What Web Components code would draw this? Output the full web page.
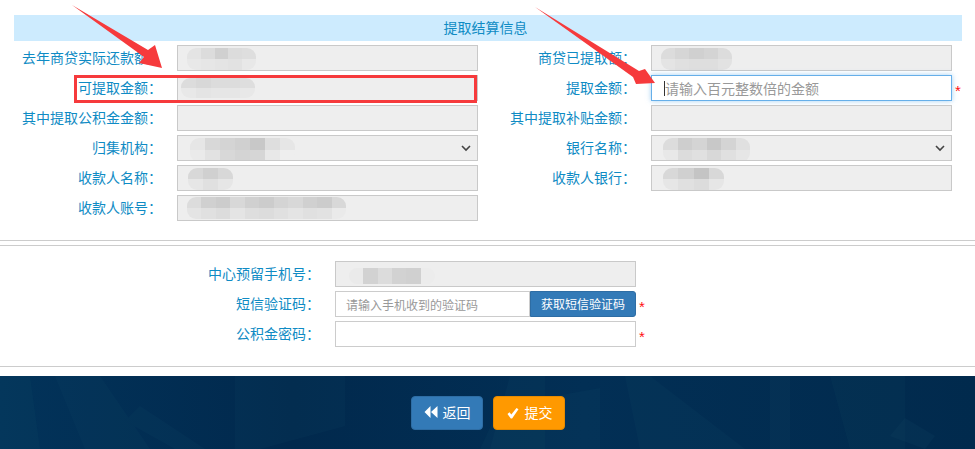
<!DOCTYPE html>
<html lang="zh-CN">
<head>
<meta charset="utf-8">
<title>提取结算信息</title>
<style>
  html, body { margin: 0; padding: 0; background: #fff; }
  body { font-family: "Noto Sans CJK SC", "Liberation Sans", sans-serif; font-size: 14px; overflow: hidden; }
</style>
</head>
<body>
<draw-page>
  <form-section top="15" bottom="19">
    <section-title>提取结算信息</section-title>
    <field-grid>
      <form-field label="去年商贷实际还款额：" state="readonly" mosaic="9,2,69,22;e4,dc,d0,dc,de;e8,e6,e4,e2,e8"></form-field>
      <form-field label="商贷已提取额：" side="right" state="readonly" mosaic="9,2,71,22;dc,d6,d0,d4,dc;e4,e0,de,de,e2"></form-field>
      <form-field label="可提取金额：" state="readonly" mosaic="3,2,74,20;dc,d8,dc,dc,de;e8,e4,e6,e6,e8"></form-field>
      <form-field label="提取金额：" side="right" state="focus" placeholder="请输入百元整数倍的金额" required></form-field>
      <form-field label="其中提取公积金金额：" state="readonly"></form-field>
      <form-field label="其中提取补贴金额：" side="right" state="readonly"></form-field>
      <form-field label="归集机构：" state="readonly" select mosaic="12,2,105,24;e6,d8,d4,d0,c8,de,e6;ea,e2,d8,d4,d6,e8,ee"></form-field>
      <form-field label="银行名称：" side="right" state="readonly" select mosaic="11,2,87,24;dc,ce,d4,c8,d4,e0;e8,dc,e0,d8,e0,e6"></form-field>
      <form-field label="收款人名称：" state="readonly" mosaic="10,2,45,22;d8,d0,d8;e6,e0,e6"></form-field>
      <form-field label="收款人银行：" side="right" state="readonly" mosaic="11,2,61,22;d8,d0,c4,d8;e6,e0,dc,e6"></form-field>
      <form-field label="收款人账号：" state="readonly" mosaic="9,1,159,22;dc,d0,cc,d8,d0,cc,d4,d8,d0,cc,d8;e4,e0,dc,e4,de,dc,e0,e4,e0,e2,ea"></form-field>
    </field-grid>
  </form-section>
  <form-section top="15" bottom="19" rule>
    <field-grid single>
      <form-field label="中心预留手机号：" side="single" state="readonly" mosaic="13,6,86,16;ea,d2,dc,d2,d0,ec"></form-field>
      <form-field label="短信验证码：" side="single" state="plain" placeholder="请输入手机收到的验证码" small sms required></form-field>
      <form-field label="公积金密码：" side="single" state="plain" required></form-field>
    </field-grid>
  </form-section>
  <page-footer>
    <action-button color="blue" icon="back">返回</action-button>
    <action-button color="orange" icon="ok">提交</action-button>
  </page-footer>
  <red-marks></red-marks>
</draw-page>

<script>
  class DrawPage extends HTMLElement {
    constructor() {
      super();
      this.attachShadow({ mode: 'open' }).innerHTML = `
        <style>
          :host { display: block; position: relative; width: 975px; height: 449px; overflow: hidden; }
        </style>
        <slot></slot>
      `;
    }
  }

  class FormSection extends HTMLElement {
    constructor() {
      super();
      const top = this.getAttribute('top');
      const bottom = this.getAttribute('bottom');
      this.attachShadow({ mode: 'open' }).innerHTML = `
        <style>
          :host { display: block; padding: ${top}px 0 ${bottom}px; border-bottom: 1px solid #ccc; }
          :host([rule]) { border-top: 1px solid #ccc; margin-top: 4px; }
        </style>
        <slot></slot>
      `;
    }
  }

  class SectionTitle extends HTMLElement {
    constructor() {
      super();
      this.attachShadow({ mode: 'open' }).innerHTML = `
        <style>
          :host {
            display: block; box-sizing: border-box;
            margin: 0 13px 4px 14px; padding-right: 5px; height: 26px; line-height: 25px;
            background: #cdebfe; color: #0f8bc4; text-align: center; font-size: 14px;
          }
        </style>
        <slot></slot>
      `;
    }
  }

  class FieldGrid extends HTMLElement {
    constructor() {
      super();
      this.attachShadow({ mode: 'open' }).innerHTML = `
        <style>
          :host { display: grid; grid-template-columns: 478px 497px; row-gap: 4px; }
          :host([single]) { grid-template-columns: 1fr; }
        </style>
        <slot></slot>
      `;
    }
  }

  class FormField extends HTMLElement {
    constructor() {
      super();
      const label = this.getAttribute('label');
      const side = this.getAttribute('side') || 'left';
      const state = this.getAttribute('state');
      const labelWidth = { left: 162, right: 158, single: 320 }[side];
      const placeholder = this.getAttribute('placeholder');
      const hasSms = this.hasAttribute('sms');

      const chevron = this.hasAttribute('select')
        ? `<svg class="chevron" width="10" height="7" viewBox="0 0 10 7"><path d="M1 1l4 4 4-4" fill="none" stroke="#444" stroke-width="1.6"/></svg>`
        : '';
      const caret = state === 'focus' ? '<i class="caret"></i>' : '';
      const text = placeholder ? `<span class="ph">${placeholder}</span>` : '';
      const sms = hasSms ? '<div class="sms">获取短信验证码</div>' : '';
      const star = this.hasAttribute('required') ? '<span class="star">*</span>' : '';

      this.attachShadow({ mode: 'open' }).innerHTML = `
        <style>
          :host {
            display: grid; grid-template-columns: ${labelWidth}px 301px 20px; column-gap: 15px;
            height: 26px; align-items: center;
          }
          .label { text-align: right; color: #0f8bc4; font-size: 14px; white-space: nowrap; line-height: 24px; height: 26px; }
          .group { display: flex; height: 26px; width: 301px; position: relative; }
          .box {
            flex: 1; min-width: 0; box-sizing: border-box; height: 26px; position: relative;
            border: 1px solid #ccc; background: #fff; display: flex; align-items: center; overflow: hidden;
          }
          .readonly { background: #eee; border-color: #c9c9c9; }
          .focus { border-color: #66afe9; box-shadow: 0 0 5px rgba(102,175,233,.6); overflow: visible; padding-left: 12px; }
          .plain { padding-left: 10px; }
          .ph { color: #999; font-size: ${this.hasAttribute('small') ? 12 : 14}px; white-space: nowrap; }
          .caret { width: 1px; height: 15px; background: #333; flex: none; }
          .chevron { position: absolute; right: 6px; top: 9px; }
          .mosaic { position: absolute; display: grid; border-radius: 9px; overflow: hidden; filter: blur(.5px); }
          .sms {
            flex: none; box-sizing: border-box; width: 106px; height: 26px; line-height: 24px; text-align: center;
            background: #337ab7; border: 1px solid #2e6da4; border-radius: 0 3px 3px 0; color: #fff; font-size: 12px;
          }
          .star { color: #f11; font: 15px/26px "Liberation Sans", sans-serif; margin-left: -12px; position: relative; top: 3px; }
        </style>
        <div class="label">${label}</div>
        <div class="group">
          <div class="box ${state}">${this.mosaicHtml()}${caret}${text}${chevron}</div>
          ${sms}
        </div>
        ${star}
      `;
    }

    // Smudged-out values: "x,y,w,h;row;row", each row a list of grey hex pairs
    mosaicHtml() {
      const spec = this.getAttribute('mosaic');
      if (!spec) return '';
      const [box, ...rows] = spec.split(';');
      const [x, y, w, h] = box.split(',');
      const cols = rows[0].split(',').length;
      const cells = rows.join(',').split(',').map(c => `<b style="background:#${c}${c}${c.slice(0, 2)}"></b>`).join('');
      return `<div class="mosaic" style="left:${x}px;top:${y}px;width:${w}px;height:${h}px;grid-template-columns:repeat(${cols},1fr);grid-template-rows:repeat(${rows.length},1fr)">${cells}</div>`;
    }
  }

  class PageFooter extends HTMLElement {
    constructor() {
      super();
      this.attachShadow({ mode: 'open' }).innerHTML = `
        <style>
          :host {
            display: flex; justify-content: center; gap: 10px; box-sizing: border-box; position: relative;
            margin-top: 9px; height: 73px; padding: 20px 0 0 1px; overflow: hidden;
            background: linear-gradient(90deg, #02335a 0%, #01294d 30%, #022f55 60%, #012a4d 100%);
          }
          svg { position: absolute; left: 0; top: 0; }
          ::slotted(*) { position: relative; }
        </style>
        <svg width="975" height="73" viewBox="0 0 975 73">
          <g fill="#1c5570" opacity=".1">
            <polygon points="55,0 100,0 150,73 85,73"/>
            <polygon points="140,30 205,73 175,73 125,45"/>
            <polygon points="235,0 345,0 345,50 260,73 235,73"/>
            <polygon points="510,0 545,0 545,73 490,73"/>
            <polygon points="625,0 650,0 745,73 640,73"/>
            <polygon points="830,0 905,0 905,73 850,73"/>
          </g>
          <g fill="#2f6f85" opacity=".07">
            <polygon points="0,0 30,0 40,73 0,73"/>
            <polygon points="500,30 600,12 600,73 480,73"/>
            <polygon points="905,42 935,60 925,73 890,60"/>
            <polygon points="770,0 790,0 790,73 770,73"/>
          </g>
        </svg>
        <slot></slot>
      `;
    }
  }

  class ActionButton extends HTMLElement {
    constructor() {
      super();
      const icons = {
        back: '<path d="M6.5 1v12L0.5 7zM13.5 1v12L7 7z" fill="#fff"/>',
        ok: '<path d="M1.5 9l2-1.7 1.8 2.2L10.5 3l2 1.3-6.4 9.2H4.8z" fill="#fff"/>'
      };
      const colors = {
        blue: 'background:#337ab7;border-color:#2e6da4',
        orange: 'background:#f90;border-color:#e68a00'
      };
      this.attachShadow({ mode: 'open' }).innerHTML = `
        <style>
          :host {
            display: flex; align-items: center; justify-content: center; gap: 5px; box-sizing: border-box;
            width: 72px; height: 34px; padding-bottom: 2px; border: 1px solid; border-radius: 4px; color: #fff; font-size: 14px;
            ${colors[this.getAttribute('color')]}
          }
          svg { flex: none; }
        </style>
        <svg width="14" height="14" viewBox="0 0 14 14">${icons[this.getAttribute('icon')]}</svg>
        <slot></slot>
      `;
    }
  }

  // Hand-drawn annotations lying over the form
  class RedMarks extends HTMLElement {
    constructor() {
      super();
      this.attachShadow({ mode: 'open' }).innerHTML = `
        <style>
          :host { position: absolute; left: 0; top: 0; width: 975px; height: 449px; pointer-events: none; }
          svg { display: block; }
        </style>
        <svg width="975" height="449" viewBox="0 0 975 449">
          <rect x="75.5" y="76.5" width="400" height="25" fill="none" stroke="#f63a3c" stroke-width="3"/>
          <polygon fill="#f63a3c" points="72,5 148,50 155,45 162,68 139,63 144,57"/>
          <polygon fill="#f63a3c" points="535,7 639,71 645,69 655,83 636,84 633,77"/>
        </svg>
      `;
    }
  }

  customElements.define('draw-page', DrawPage);
  customElements.define('form-section', FormSection);
  customElements.define('section-title', SectionTitle);
  customElements.define('field-grid', FieldGrid);
  customElements.define('form-field', FormField);
  customElements.define('page-footer', PageFooter);
  customElements.define('action-button', ActionButton);
  customElements.define('red-marks', RedMarks);
</script>
</body>
</html>
